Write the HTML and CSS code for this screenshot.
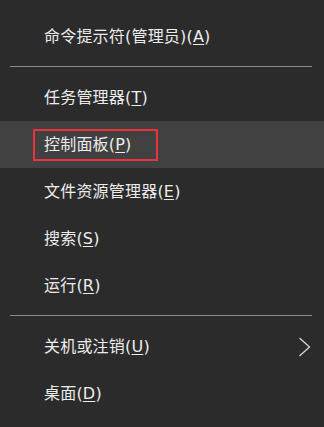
FILE: index.html
```html
<!DOCTYPE html>
<html lang="zh-CN">
<head>
    <meta charset="UTF-8">
    <meta name="viewport" content="width=device-width, initial-scale=1.0">
    <title>Win+X 菜单</title>
    <link rel="stylesheet" href="styles.css">
</head>
<body>

<div class="menu">
    <div class="menu-item"><span class="label">命令提示符(管理员)(<u>A</u>)</span></div>
    <div class="separator"></div>
    <div class="menu-item"><span class="label">任务管理器(<u>T</u>)</span></div>
    <div class="menu-item active"><span class="label marked">控制面板(<u>P</u>)</span></div>
    <div class="menu-item"><span class="label">文件资源管理器(<u>E</u>)</span></div>
    <div class="menu-item"><span class="label">搜索(<u>S</u>)</span></div>
    <div class="menu-item"><span class="label">运行(<u>R</u>)</span></div>
    <div class="separator"></div>
    <div class="menu-item has-sub">
        <span class="label">关机或注销(<u>U</u>)</span>
        <svg class="chevron" width="14" height="20" viewBox="0 0 14 20">
            <polyline points="1.5,1 11.5,10 1.5,19" fill="none" stroke="#d4d4d4" stroke-width="1.3"/>
        </svg>
    </div>
    <div class="menu-item"><span class="label">桌面(<u>D</u>)</span></div>
</div>

</body>
</html>
```

FILE: styles.css
```css
html, body {
    margin: 0;
    padding: 0;
}
body {
    background-color: #2b2b2b;
    font-family: "DejaVu Sans", "Noto Sans CJK SC", sans-serif;
    font-size: 16px;
    letter-spacing: 0.2px;
    color: #ececec;
    width: 324px;
    height: 427px;
    overflow: hidden;
}
.menu {
    padding-top: 13px;
}
.menu-item {
    height: 47px;
    display: flex;
    align-items: center;
    justify-content: space-between;
    padding: 0 12px 0 44px;
}
.menu-item.active {
    background-color: #414141;
}
.label {
    position: relative;
    line-height: 20px;
}
.label u {
    text-underline-offset: 2px;
    text-decoration-thickness: 1px;
}
.marked::after {
    content: "";
    position: absolute;
    left: -11px;
    right: -26px;
    top: -6px;
    bottom: -6px;
    border: 2px solid #e8343a;
}
.separator {
    height: 1px;
    margin: 6px 12px 7px 10px;
    background-color: #8a8a8a;
}
.chevron {
    display: block;
}
```
